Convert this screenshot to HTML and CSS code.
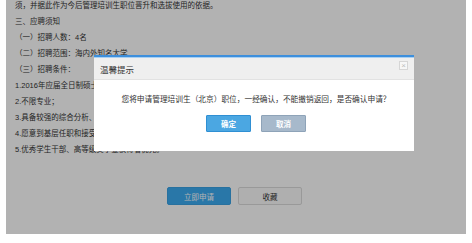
FILE: index.html
```html
<!DOCTYPE html>
<html lang="zh-CN">
<head>
<meta charset="utf-8">
<link rel="stylesheet" href="styles.css">
</head>
<body>
<div class="page">
  <div class="content">
    <p>须，并据此作为今后管理培训生职位晋升和选拔使用的依据。</p>
    <p>三、应聘须知</p>
    <p>（一）招聘人数：4名</p>
    <p>（二）招聘范围：海内外知名大学</p>
    <p>（三）招聘条件：</p>
    <p>1.2016年应届全日制硕士及以上学历毕业生；</p>
    <p>2.不限专业；</p>
    <p>3.具备较强的综合分析、沟通协调和团队合作能力；</p>
    <p>4.愿意到基层任职和接受轮岗锻炼；</p>
    <p>5.优秀学生干部、高等级奖学金获得者优先。</p>
    <div class="actions">
      <button class="btn-apply">立即申请</button>
      <button class="btn-fav">收藏</button>
    </div>
  </div>
  <div class="mask"></div>
  <div class="dialog">
    <div class="dialog-head">
      <span class="dialog-title">温馨提示</span>
      <span class="dialog-close">×</span>
    </div>
    <div class="dialog-body">
      <p class="dialog-msg">您将申请管理培训生（北京）职位，一经确认，不能撤销返回，是否确认申请？</p>
      <div class="dialog-btns">
        <button class="btn-ok">确定</button>
        <button class="btn-cancel">取消</button>
      </div>
    </div>
  </div>
</div>
</body>
</html>
```
FILE: styles.css
```css
* { box-sizing: border-box; }
html, body { margin: 0; padding: 0; background: #fff; }
body {
  font-family: "Liberation Sans", "Noto Sans CJK SC", sans-serif;
  width: 472px; height: 243px; overflow: hidden;
}
.page {
  position: relative;
  margin: 0 6px;
  height: 234px;
  overflow: hidden;
  background: #fff;
}
.content {
  padding: 0 0 0 9px;
  margin-top: -2px;
  color: #333;
  font-size: 7.5px;
}
.content p {
  margin: 0;
  height: 16px;
  line-height: 16px;
  white-space: nowrap;
}
.actions {
  display: flex;
  justify-content: center;
  gap: 7px;
  margin-top: 29px;
  padding-right: 12px;
}
.actions button {
  width: 64px;
  height: 18px;
  font-family: inherit;
  font-size: 7.5px;
  padding: 0;
  border-radius: 2px;
}
.btn-apply {
  background: #3cabf1;
  border: 1px solid #3aa2e4;
  color: #fff;
}
.btn-fav {
  background: #fbfbfb;
  border: 1px solid #dcdcdc;
  color: #333;
}
.mask {
  position: absolute;
  inset: 0;
  background: rgba(0, 0, 0, 0.3);
}
.dialog {
  position: absolute;
  left: 88px;
  top: 55px;
  width: 320px;
  height: 96px;
  background: #fff;
  border-top: 2px solid #3d8fdc;
}
.dialog-head {
  height: 23px;
  background: #efefef;
  border-top: 1px solid #a9d0f2;
  border-bottom: 1px solid #e2e2e2;
  display: flex;
  align-items: center;
  justify-content: space-between;
  padding: 0 6px 0 6px;
}
.dialog-title {
  font-size: 8.5px;
  color: #333;
}
.dialog-close {
  width: 9px;
  height: 9px;
  border: 1px solid #d6d6d6;
  background: #f7f7f7;
  color: #bdbdbd;
  font-size: 8px;
  line-height: 7px;
  text-align: center;
  margin-top: -6px;
}
.dialog-body {
  padding-top: 15px;
}
.dialog-msg {
  margin: 0;
  text-align: center;
  font-size: 7.7px;
  line-height: 10px;
  color: #333;
  padding-left: 4px;
}
.dialog-btns {
  display: flex;
  justify-content: center;
  gap: 10px;
  margin-top: 10px;
  padding-left: 4px;
}
.dialog-btns button {
  width: 45px;
  height: 17px;
  padding: 0;
  font-family: inherit;
  font-size: 7.5px;
  font-weight: bold;
  color: #fff;
  border-radius: 1px;
}
.btn-ok {
  background: #4ba7e2;
  border: 1px solid #2f8fd3;
}
.btn-cancel {
  background: #a7b9cb;
  border: 1px solid #8ea3b8;
}
```
